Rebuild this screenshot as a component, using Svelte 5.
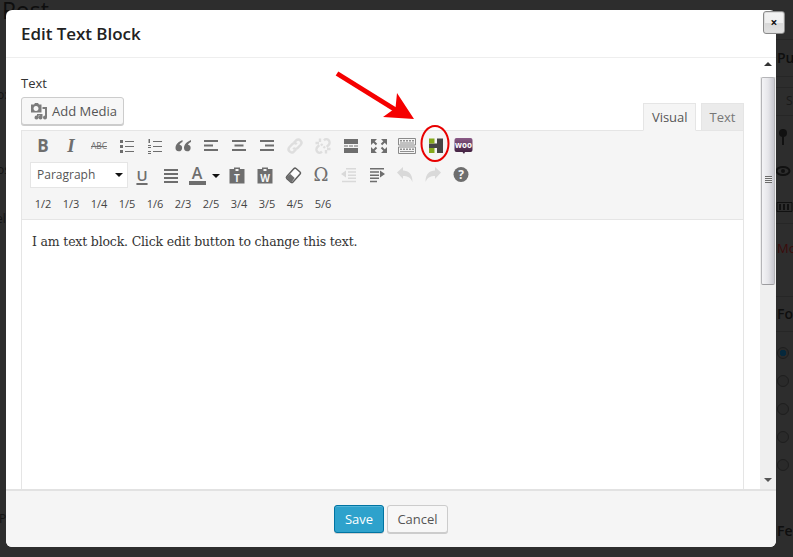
<script>
  const r = (x, y, w, h) => `M${x} ${y}h${w}v${h}h${-w}z`;
  const linkA = 'M9 6.5l2.2-2.2a3.2 3.2 0 0 1 4.5 4.5l-3 3a3.2 3.2 0 0 1-4.5 0';
  const linkB = 'M11 13.5l-2.2 2.2a3.2 3.2 0 0 1-4.5-4.5l3-3a3.2 3.2 0 0 1 4.5 0';

  const row1 = [
    { t: 'B', c: 'bold' },
    { t: 'I', c: 'ital' },
    { t: 'ABC', c: 'abc' },
    { d: r(3, 4, 3, 3) + r(3, 9, 3, 3) + r(3, 14, 3, 3) + r(8, 5, 9, 1) + r(8, 10, 9, 1) + r(8, 15, 9, 1) },
    { d: r(3.5, 3, 1.5, 4) + r(3, 9, 3, 1) + r(3, 11, 3, 1) + r(3, 15, 3, 1) + r(3, 17, 3, 1) + r(8, 5, 9, 1) + r(8, 10, 9, 1) + r(8, 15, 9, 1) },
    { d: 'M9.500 4C5.500 5.500 2.500 8.500 2.500 12a3.300 3.300 0 1 0 4-3.200C6.800 7.800 8 6.700 9.500 6zM18 4c-4 1.500-7 4.500-7 8a3.300 3.300 0 1 0 4-3.200c.3-1 1.500-2.100 3-2.800z' },
    { d: r(3, 4, 14, 2) + r(3, 8.5, 9, 2) + r(3, 13, 14, 2) },
    { d: r(3, 4, 14, 2) + r(5.5, 8.5, 9, 2) + r(3, 13, 14, 2) },
    { d: r(3, 4, 14, 2) + r(8, 8.5, 9, 2) + r(3, 13, 14, 2) },
    { d: linkA + linkB, s: 1, off: 1 },
    { d: 'M11 4.300a3.200 3.200 0 0 1 4.700 4.500l-2 2M9 15.700a3.200 3.200 0 0 1-4.700-4.500l2-2M7 2.500v3.500M2.500 7H6M13 17.500V14M17.500 13H14M8 8l1.500 1.500M12 12l-1.500-1.500', s: 1, off: 1 },
    { d: r(3, 3, 14, 5) + r(3, 9.5, 4, 1) + r(8, 9.5, 4, 1) + r(13, 9.5, 4, 1) + r(3, 12, 14, 5) },
    { d: 'M2 3h6L2 9zM18 3h-6l6 6zM2 17h6l-6-6zM18 17h-6l6-6z', ex: 'M4 5l3.500 3.500M16 5l-3.500 3.500M4 15l3.500-3.500M16 15l-3.500-3.500' },
    { kb: 1 },
    { h: 1 },
    { woo: 1 }
  ];

  const row2 = [
    { d: r(3, 4, 14, 2) + r(3, 8, 14, 2) + r(3, 12, 14, 2) + r(3, 16, 14, 2), gap: 1 },
    { a: 1 },
    { d: 'M7 2.500h6V4h4.500v14.500h-15V4H7zM8.500 4v2h3V4z', tt: 'T' },
    { d: 'M7 2.500h6V4h4.500v14.500h-15V4H7zM8.500 4v2h3V4z', tt: 'W' },
    { eraser: 1 },
    { t: 'Ω', c: 'omega' },
    { d: r(7, 3, 10, 1.5) + r(9, 6.2, 8, 1.5) + r(9, 9.4, 8, 1.5) + r(9, 12.6, 8, 1.5) + r(3, 15.8, 14, 1.5) + 'M2 9l5-3.500v7z', off: 1 },
    { d: r(3, 3, 14, 1.5) + r(3, 6.2, 9, 1.5) + r(3, 9.4, 9, 1.5) + r(3, 12.6, 9, 1.5) + r(3, 15.8, 7, 1.5) + 'M18 9l-5-3.500v7z' },
    { d: 'M2 7.500L8 2v3.600c5.500 0 9.500 3.200 9.500 11.400-2-4.600-5-6-9.500-6v3z', off: 1 },
    { d: 'M18 7.500L12 2v3.600c-5.500 0-9.500 3.200-9.500 11.400 2-4.600 5-6 9.500-6v3z', off: 1 },
    { help: 1 }
  ];

  const fractions = ['1/2', '1/3', '1/4', '1/5', '1/6', '2/3', '2/5', '3/4', '3/5', '4/5', '5/6'];
  const radios = [true, false, false, false, false];
</script>

{#snippet icon(b)}
  <span class="ico" class:off={b.off}>
    {#if b.t}
      <span class={b.c}>{b.t}</span>
    {:else if b.kb}
      <svg viewBox="0 0 20 20" width="20" height="20">
        <path class="kbo" d="M1.500 2.500h17v6.500h-17zM1.500 11h17v6.500h-17z" />
        <path class="kbk" d={r(3, 4, 2, 1.5) + r(6, 4, 2, 1.5) + r(9, 4, 2, 1.5) + r(12, 4, 2, 1.5) + r(15, 4, 2, 1.5) + r(3, 6.5, 14, 1) + r(3, 12.5, 2, 1.5) + r(6, 12.5, 2, 1.5) + r(9, 12.5, 2, 1.5) + r(12, 12.5, 2, 1.5) + r(15, 12.5, 2, 1.5) + r(3, 15, 14, 1)} />
      </svg>
    {:else if b.h}
      <svg viewBox="0 0 20 20" width="20" height="20">
        <path class="hdark" d={r(4, 7.5, 10, 4.5) + r(12, 2.5, 6, 14.5)} />
        <path class="hgreen" d={r(4, 2.5, 5.5, 5) + r(4, 12, 5.5, 5)} />
      </svg>
    {:else if b.woo}
      <svg viewBox="0 0 20 20" width="20" height="20">
        <defs>
          <linearGradient id="woog" x1="0" y1="0" x2="0" y2="1">
            <stop offset="0" stop-color="#8a5a86" />
            <stop offset="1" stop-color="#3a1b39" />
          </linearGradient>
        </defs>
        <path fill="url(#woog)" d="M3.500 2h14a2 2 0 0 1 2 2v10a2 2 0 0 1-2 2h-5.500l-1 2-1.500-2H3.500a2 2 0 0 1-2-2V4a2 2 0 0 1 2-2z" />
        <text x="10.500" y="11.500" class="wootext">woo</text>
      </svg>
    {:else if b.a}
      <span class="acolor">A</span>
    {:else if b.eraser}
      <svg viewBox="0 0 20 20" width="20" height="20">
        <path class="erasero" d="M13 3.500l4 3.500a1.500 1.500 0 0 1 .1 2.100L10 17a1.500 1.500 0 0 1-2.100.1L3.900 13.600a1.500 1.500 0 0 1-.1-2.100L11 3.600a1.500 1.500 0 0 1 2-.1z" />
        <path class="fillp" d="M3.200 12.300L7.400 9l4.300 4-2.700 3.800a1.700 1.700 0 0 1-2 .2z" />
      </svg>
    {:else if b.help}
      <svg viewBox="0 0 20 20" width="20" height="20">
        <circle class="fillp" cx="10" cy="9.500" r="7.500" />
        <text x="10" y="14" class="helptext">?</text>
      </svg>
    {:else}
      <svg viewBox="0 0 20 20" width="20" height="20">
        <path class={b.s ? 'strokep' : 'fillp'} fill-rule="evenodd" d={b.d} />
        {#if b.ex}<path class="thinp" d={b.ex} />{/if}
        {#if b.tt}<text x="10" y="16.500" class="cliptext">{b.tt}</text>{/if}
      </svg>
    {/if}
  </span>
{/snippet}

<div class="page">
  <div class="under">
    <span class="bg post">Post</span>
    <span class="bg pu">Pu</span>
    <span class="bg s">S</span>
    <span class="bg mo">Mo</span>
    <span class="bg fo">Fo</span>
    <span class="bg fe">Fe</span>
    <span class="bg l1">o:</span>
    <span class="bg l2">os</span>
    <span class="bg l3">el</span>
    <span class="bg l4">P</span>
    <i class="ln a"></i><i class="ln b"></i><i class="ln c"></i><i class="ln d"></i><i class="ln e"></i><i class="ln f"></i><i class="ln g"></i>
    <div class="radios">
      {#each radios as on}
        <span class="radio" class:on></span>
      {/each}
    </div>
    <svg class="pin" viewBox="0 0 17 90" width="17" height="90">
      <circle cx="7" cy="5" r="4" fill="#111" />
      <rect x="6" y="8" width="2" height="9" fill="#111" />
      <ellipse cx="7" cy="43" rx="6.500" ry="4" fill="none" stroke="#111" stroke-width="2" />
      <circle cx="7" cy="43" r="2" fill="#111" />
      <path d="M1 74.500h15v9H1z" fill="none" stroke="#111" />
      <path d="M4 76v6M8 76v6M12 76v6" stroke="#111" stroke-width="2" />
    </svg>
  </div>

  <div class="modal">
    <header class="head"><h1>Edit Text Block</h1></header>
    <div class="body">
      <div class="content">
        <div class="label">Text</div>
        <div class="bar">
          <button class="media">
            <svg viewBox="0 0 18 18" width="18" height="18">
              <path class="mediap" d="M1 2.500h3L5 1h3l1 1.500h2.500v8H1zM6 4a2.500 2.500 0 1 0 .01 0z" fill-rule="evenodd" />
              <path class="mediap" d="M12.500 5H17v10.500a2 2 0 1 1-2-2V7h-2.500zM7 12h5.500v3.500a2 2 0 1 1-2-2V13.500H8.500v2a2 2 0 1 1-1.500-1.900z" />
            </svg>
            Add Media
          </button>
          <div class="tabs">
            <span class="tab active">Visual</span>
            <span class="tab">Text</span>
          </div>
        </div>
        <div class="editor">
          <div class="toolbar">
            <div class="row">
              {#each row1 as b}
                <span class="btn">{@render icon(b)}</span>
              {/each}
            </div>
            <div class="row">
              <span class="select">Paragraph<i class="caret"></i></span>
              <span class="btn u"><span class="under-u">U</span></span>
              {#each row2 as b}
                {#if b.a}
                  <span class="btn colorbtn">{@render icon(b)}<i class="caret"></i></span>
                {:else}
                  <span class="btn" class:gap={b.gap}>{@render icon(b)}</span>
                {/if}
              {/each}
            </div>
            <div class="row">
              {#each fractions as f}
                <span class="btn frac">{f}</span>
              {/each}
            </div>
          </div>
          <div class="area">I am text block. Click edit button to change this text.</div>
        </div>
      </div>
      <div class="scroll">
        <span class="sarrow up"></span>
        <div class="thumb"><span class="grip"></span></div>
        <span class="sspace"></span>
        <span class="sarrow down"></span>
      </div>
    </div>
    <footer class="foot">
      <button class="save">Save</button>
      <button class="cancel">Cancel</button>
    </footer>
  </div>

  <button class="close">×</button>

  <svg class="mark" viewBox="0 0 793 557" width="793" height="557">
    <path d="M337 73.500L399 112" stroke="#f50000" stroke-width="5" fill="none" />
    <path d="M414 119L397 93 395.500 108 383 117z" fill="#f50000" />
    <ellipse cx="435" cy="143.500" rx="13.500" ry="17.500" fill="none" stroke="#e80000" stroke-width="2" />
  </svg>
</div>

<style>
  :global(body) { margin: 0; background: #2f2f2f; }
  .page {
    position: relative;
    width: 793px;
    height: 557px;
    overflow: hidden;
    background: #2d2d2d;
    font-family: "Open Sans", sans-serif;
    color: #333;
  }
  .under { position: absolute; inset: 0; }
  .bg { position: absolute; color: #0e0e0e; font-size: 14px; line-height: 18px; }
  .post { left: 2px; top: -5px; font-size: 23px; line-height: 30px; }
  .pu { left: 777px; top: 49px; font-size: 14px; font-weight: 600; }
  .s { left: 786px; top: 92px; font-size: 12px; color: #1a1a1a; }
  .mo { left: 777px; top: 239px; color: #3c0b0b; font-size: 13px; }
  .fo { left: 777px; top: 305px; font-weight: 600; }
  .fe { left: 777px; top: 522px; font-weight: 600; }
  .l1 { left: -3px; top: 86px; font-size: 12px; color: #141414; }
  .l2 { left: -3px; top: 161px; font-size: 12px; color: #141414; }
  .l3 { left: -4px; top: 210px; font-size: 12px; color: #141414; }
  .l4 { left: -1px; top: 510px; font-size: 12px; color: #141414; }
  .ln { position: absolute; left: 776px; width: 17px; height: 1px; background: #262626; }
  .a { top: 39px; } .b { top: 76px; } .c { top: 87px; } .d { top: 115px; } .e { top: 223px; } .f { top: 296px; } .g { top: 331px; }
  .radios {
    position: absolute;
    left: 777px;
    top: 347px;
    display: flex;
    flex-direction: column;
    gap: 16px;
  }
  .radio { width: 10px; height: 10px; border: 1px solid #1e1e1e; border-radius: 50%; background: #2a2a2a; }
  .radio.on { background: radial-gradient(circle, #06283c 45%, #2a2a2a 50%); }
  .pin { position: absolute; left: 776px; top: 128px; }

  .modal {
    position: absolute;
    left: 6px;
    top: 10px;
    width: 770px;
    height: 537px;
    background: #fff;
    border-radius: 6px;
    display: flex;
    flex-direction: column;
    overflow: hidden;
  }
  .head {
    height: 47px;
    flex: none;
    border-bottom: 1px solid #eee;
    padding-left: 15px;
    display: flex;
    align-items: center;
  }
  h1 { margin: 0; font-size: 17px; font-weight: 600; color: #222; line-height: 48px; letter-spacing: -.05px; }
  .body { flex: 1; min-height: 0; display: flex; overflow: hidden; }
  .content { flex: 1; min-width: 0; padding: 16px 16px 0 15px; display: flex; flex-direction: column; }
  .label { font-size: 13px; font-weight: 500; line-height: 18px; color: #333; }
  .bar { display: flex; justify-content: space-between; align-items: flex-end; margin-top: 5px; height: 33px; }
  button { font-family: inherit; cursor: pointer; }
  .media {
    align-self: flex-start;
    height: 28px;
    width: 103px;
    padding: 0 0 0 8px;
    display: flex;
    align-items: center;
    gap: 4px;
    font-size: 13px;
    color: #555;
    background: #f7f7f7;
    border: 1px solid #ccc;
    border-radius: 3px;
    box-shadow: 0 1px 0 #ccc;
    white-space: nowrap;
  }
  .mediap { fill: #7c7c7c; }
  .tabs { display: flex; gap: 5px; margin-bottom: -1px; position: relative; }
  .tab {
    height: 26px;
    line-height: 27px;
    padding: 0 7.500px;
    font-size: 13px;
    color: #777;
    background: #ebebeb;
    border: 1px solid #e5e5e5;
  }
  .tab.active { background: #f5f5f5; color: #555; border-bottom-color: #f5f5f5; }
  .editor { border: 1px solid #e5e5e5; border-bottom: 0; flex: 1; display: flex; flex-direction: column; }
  .toolbar { height: 88px; flex: none; background: #f5f5f5; border-bottom: 1px solid #e5e5e5; padding-left: 7px; }
  .row { height: 29px; display: flex; align-items: center; }
  .btn { width: 28px; height: 28px; flex: none; display: flex; align-items: center; justify-content: center; }
  .gap { margin-left: 1px; }
  .ico { display: flex; align-items: center; justify-content: center; width: 20px; height: 20px; }
  .fillp { fill: #6e6e6e; }
  .off .fillp { fill: #d9d9d9; }
  .strokep { fill: none; stroke: #6e6e6e; stroke-width: 2.400; }
  .off .strokep { stroke: #dedede; }
  .thinp { fill: none; stroke: #6e6e6e; stroke-width: 2; }
  .kbo { fill: none; stroke: #8a8a8a; stroke-width: 1; }
  .kbk { fill: #909090; }
  .erasero { fill: #fdfdfd; stroke: #5e5e5e; stroke-width: 1.500; }
  .hgreen { fill: #84a91c; }
  .hdark { fill: #454545; }
  .wootext { font: 700 8px "Open Sans", sans-serif; fill: #fff; text-anchor: middle; }
  .helptext { font: 700 12px "Open Sans", sans-serif; fill: #f5f5f5; text-anchor: middle; }
  .cliptext { font: 700 10px "Open Sans", sans-serif; fill: #f5f5f5; text-anchor: middle; }
  .bold { font: 700 17px "Open Sans", sans-serif; color: #6e6e6e; }
  .ital { font: italic 700 19px "Liberation Serif", serif; color: #6e6e6e; }
  .abc { font: 400 8.500px "Open Sans", sans-serif; color: #6e6e6e; text-decoration: line-through; letter-spacing: -.1px; }
  .omega { font: 400 18px "DejaVu Serif", serif; color: #6e6e6e; }
  .under-u { font: 600 15px "Open Sans", sans-serif; color: #6e6e6e; text-decoration: underline; text-underline-offset: 2px; text-decoration-thickness: 2px; }
  .select {
    margin-left: 1px;
    flex: none;
    position: relative;
    display: flex;
    align-items: center;
    padding-left: 6px;
    box-sizing: border-box;
    width: 98px;
    height: 26px;
    background: #fff;
    border: 1px solid #e5e5e5;
    font-size: 12px;
    color: #555;
  }
  .caret {
    position: absolute;
    width: 0;
    height: 0;
    border: 4px solid transparent;
    border-top-color: #111;
    border-bottom: 0;
  }
  .select .caret { right: 4px; top: 10px; }
  .colorbtn { width: 38px; position: relative; justify-content: flex-start; padding-left: 2px; box-sizing: border-box; }
  .acolor {
    font: 600 16px/18px "Open Sans", sans-serif;
    color: #6e6e6e;
    border-bottom: 4px solid #6e6e6e;
    width: 17px;
    text-align: center;
    height: 17px;
  }
  .colorbtn .caret { left: 27px; top: 13px; }
  .frac { font-size: 11px; font-weight: 500; color: #444; }
  .area {
    flex: 1;
    background: #fff;
    padding: 12px 10px;
    font: 12.500px/20px "DejaVu Serif", serif;
    letter-spacing: -.18px;
    color: #333;
  }
  .scroll {
    width: 16px;
    flex: none;
    background: #efefef;
    display: flex;
    flex-direction: column;
    align-items: center;
  }
  .sarrow { width: 16px; height: 19px; flex: none; position: relative; }
  .sarrow::after {
    content: "";
    position: absolute;
    left: 4px;
    border: 4px solid transparent;
  }
  .up::after { top: 4px; border-bottom-color: #333; border-top: 0; }
  .down { height: 17px; }
  .down::after { top: 6px; border-top-color: #555; border-bottom: 0; }
  .sarrow.up { background: #fff; }
  .thumb {
    width: 14px;
    height: 208px;
    flex: none;
    box-sizing: border-box;
    border: 1px solid #b5b5b8;
    border-bottom-color: #9c9c9f;
    border-radius: 2px;
    background: linear-gradient(90deg, #f4f4f6 0%, #e6e6ea 50%, #c9c9d0 100%);
    display: flex;
    align-items: center;
    justify-content: center;
  }
  .grip {
    width: 7px;
    height: 7px;
    margin-top: -3px;
    background: repeating-linear-gradient(180deg, #6b6b6b 0 1px, #ededed 1px 2px);
  }
  .sspace { flex: 1; }
  .foot {
    height: 58px;
    flex: none;
    box-sizing: border-box;
    border-top: 2px solid #e2e2e2;
    background: #f5f5f5;
    display: flex;
    align-items: center;
    justify-content: center;
    gap: 3px;
  }
  .foot button { height: 28px; font-size: 13px; border-radius: 3px; padding: 0; }
  .save {
    width: 50px;
    color: #fff;
    background: #2ea2cc;
    border: 1px solid #0074a2;
    box-shadow: inset 0 1px 0 rgba(120, 200, 230, .5), 0 1px 0 rgba(0, 0, 0, .15);
  }
  .cancel {
    width: 61px;
    color: #555;
    background: #f7f7f7;
    border: 1px solid #ccc;
    box-shadow: 0 1px 0 #ccc;
  }
  .close {
    position: absolute;
    left: 763px;
    top: 11px;
    width: 22px;
    height: 23px;
    padding: 0;
    border: 1px solid #8a8a8a;
    border-radius: 3px;
    background: linear-gradient(180deg, #f2f2f2 0%, #efefef 50%, #d8d8d8 55%, #e2e2e2 100%);
    box-shadow: 0 0 0 1px #ddd inset;
    color: #111;
    font: 700 12px/20px "Open Sans", sans-serif;
  }
  .mark { position: absolute; left: 0; top: 0; pointer-events: none; }
</style>
